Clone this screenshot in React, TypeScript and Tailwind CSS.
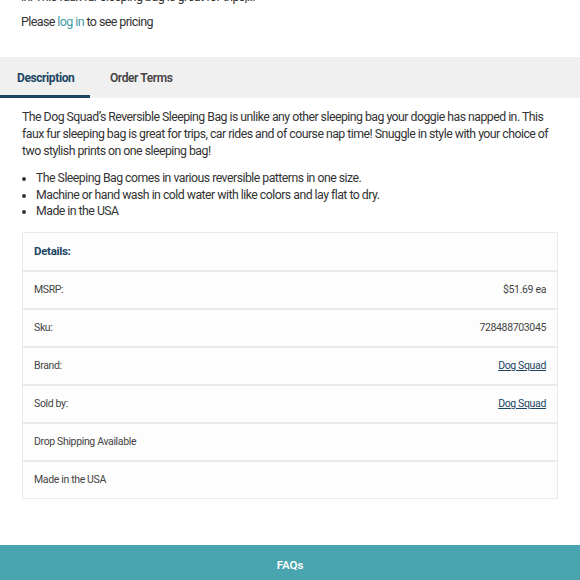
export default function App() {
  const rows: { label: string; value?: string; link?: boolean }[] = [
    { label: "MSRP:", value: "$51.69 ea" },
    { label: "Sku:", value: "728488703045" },
    { label: "Brand:", value: "Dog Squad", link: true },
    { label: "Sold by:", value: "Dog Squad", link: true },
    { label: "Drop Shipping Available" },
    { label: "Made in the USA" },
  ];

  return (
    <div className="w-[580px] h-[580px] overflow-hidden bg-white text-[#333] font-['Roboto',sans-serif]">
      {/* Summary */}
      <div className="px-[21px]">
        <p className="mt-[-12px] text-[12.5px] leading-[17px] tracking-[-0.55px]">
          in. This faux fur sleeping bag is great for trips,...
        </p>
        <p className="mt-[8px] text-[12.5px] leading-[17px] tracking-[-0.6px]">
          Please <a className="text-[#3f9aa6]">log in</a> to see pricing
        </p>
      </div>

      {/* Tabs */}
      <div className="mt-[27px] flex h-[41px] bg-[#f0f0f0]">
        <div className="flex w-[90px] items-center border-b-[3px] border-[#1b4563] pl-[17px] pt-[3px] text-[12px] font-bold tracking-[-0.4px] text-[#1b4563]">
          Description
        </div>
        <div className="flex items-center pl-[20px] text-[12px] font-semibold tracking-[-0.4px] text-[#444]">
          Order Terms
        </div>
      </div>

      {/* Description */}
      <div className="px-[22px] pt-[11px]">
        <p className="text-[12.3px] leading-[17px] tracking-[-0.52px]">
          The Dog Squad’s Reversible Sleeping Bag is unlike any other sleeping bag your doggie has napped in. This faux fur sleeping bag is great for trips, car rides and of course nap time! Snuggle in style with your choice of two stylish prints on one sleeping bag!
        </p>
        <ul className="mt-[10px] list-disc pl-[14px] text-[12.3px] leading-[16.7px] tracking-[-0.52px]">
          <li>The Sleeping Bag comes in various reversible patterns in one size.</li>
          <li>Machine or hand wash in cold water with like colors and lay flat to dry.</li>
          <li>Made in the USA</li>
        </ul>

        {/* Details table */}
        <div className="mt-[12px] border border-[#eaeaea] bg-[#fdfdfd]">
          <div className="flex h-[37px] items-center px-[11px] text-[11.5px] font-bold tracking-[-0.3px] text-[#1b4563]">
            Details:
          </div>
          {rows.map((r) => (
            <div
              key={r.label}
              className="flex h-[38px] items-center justify-between border-t-2 border-[#e8e8e8] px-[11px] text-[10.5px] tracking-[-0.35px] text-[#444]"
            >
              <span>{r.label}</span>
              {r.value && (
                <span className={r.link ? "text-[#1b4563] underline" : ""}>{r.value}</span>
              )}
            </div>
          ))}
        </div>
      </div>

      {/* Footer */}
      <div className="mt-[46px] flex h-[40px] justify-center bg-[#48a4ae] pt-[12px] text-[11.5px] font-semibold text-white">
        FAQs
      </div>
    </div>
  );
}
